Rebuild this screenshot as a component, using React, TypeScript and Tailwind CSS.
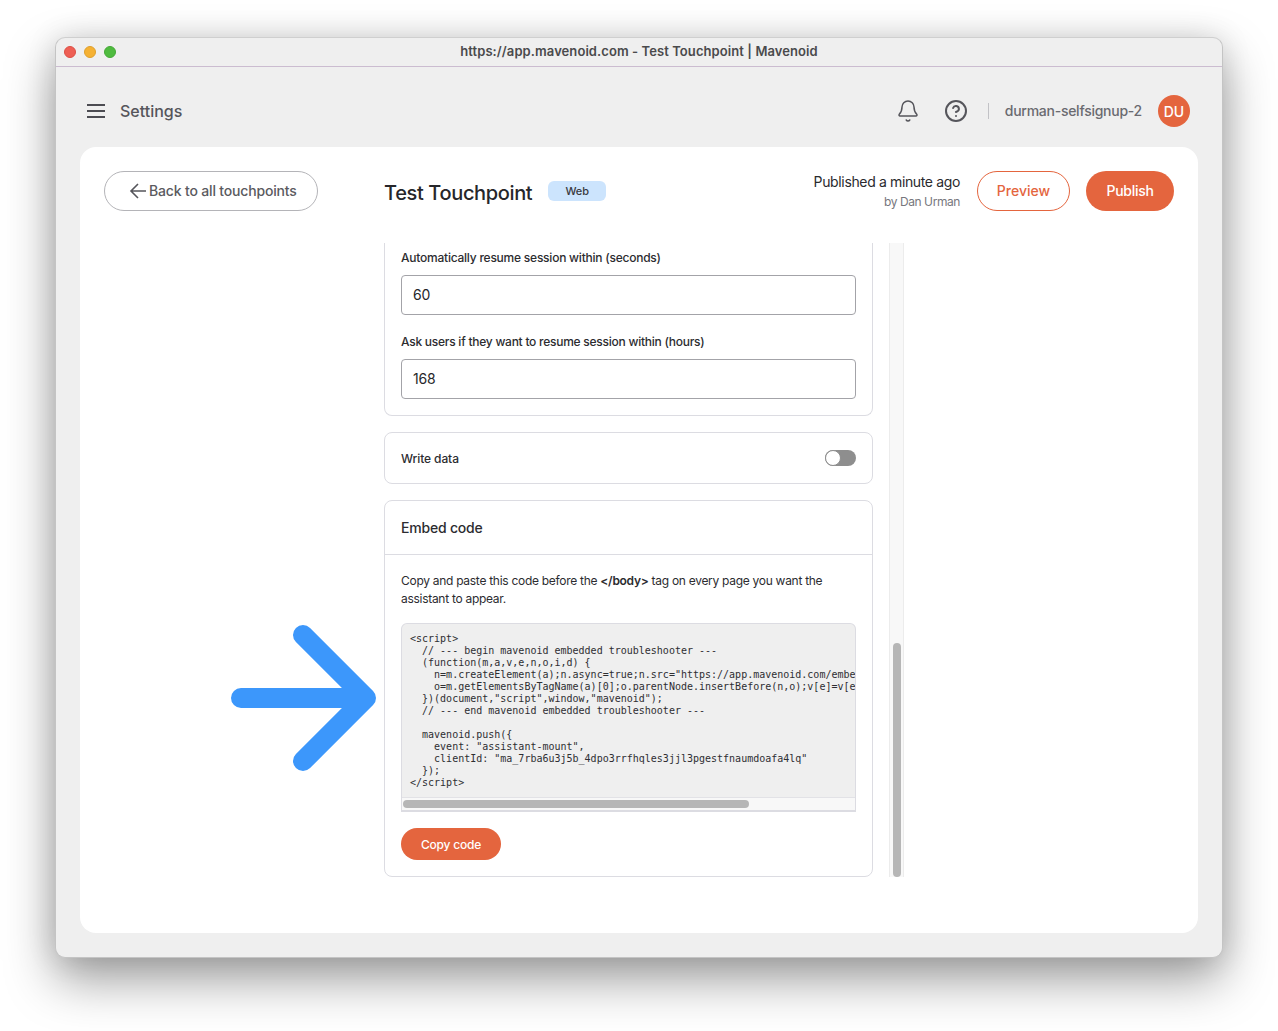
import { Bell, CircleHelp } from "lucide-react";

const codeLines = `<script>
  // --- begin mavenoid embedded troubleshooter ---
  (function(m,a,v,e,n,o,i,d) {
    n=m.createElement(a);n.async=true;n.src="https://app.mavenoid.com/embedded/embedded.js";
    o=m.getElementsByTagName(a)[0];o.parentNode.insertBefore(n,o);v[e]=v[e]||[];
  })(document,"script",window,"mavenoid");
  // --- end mavenoid embedded troubleshooter ---

  mavenoid.push({
    event: "assistant-mount",
    clientId: "ma_7rba6u3j5b_4dpo3rrfhqles3jjl3pgestfnaumdoafa4lq"
  });
</script>`;

function Field({ label, value, tracking }: { label: string; value: string; tracking: string }) {
  return (
    <div className="flex flex-col">
      <label className={`h-[18px] pt-px text-[12px] leading-[18px] font-medium text-[#2c2c30] ${tracking}`}>{label}</label>
      <div className="mt-[9px] h-10 rounded-[4px] border border-[#a3a3a8] px-[11px] pb-px flex items-center text-[14px] tracking-[-0.2px] text-[#26262a]">
        {value}
      </div>
    </div>
  );
}

function BigArrow() {
  return (
    <svg width="150" height="150" viewBox="0 0 150 150" className="absolute left-[173px] top-[584px]">
      <path d="M12 76 H137 M74 13 L137 76 L74 139" fill="none" stroke="#3c97fb" strokeWidth="20" strokeLinecap="round" strokeLinejoin="round" />
    </svg>
  );
}

export default function App() {
  return (
    <div className="w-[1278px] h-[1031px] bg-white pt-[38px] pl-[56px] overflow-hidden font-['Inter',sans-serif]">
      <div className="relative w-[1168px] h-[921px] rounded-[10px] bg-[#efefef] border border-[#c4c4c4] border-t-[#cfcfcf] shadow-[0_22px_50px_rgba(0,0,0,0.38),0_0_30px_rgba(0,0,0,0.12)] flex flex-col box-border -ml-px -mt-px">
        {/* title bar */}
        <div className="relative h-[29px] shrink-0 border-b border-[#cbbcd0] flex items-center justify-center">
          <div className="absolute left-[8px] top-[8px] flex gap-2">
            <span className="w-3 h-3 rounded-full bg-[#ee5f54] border border-[#dd4f45]" />
            <span className="w-3 h-3 rounded-full bg-[#f5b133] border border-[#dfa02c]" />
            <span className="w-3 h-3 rounded-full bg-[#4fbb3f] border border-[#45a937]" />
          </div>
          <span className="text-[13px] font-semibold tracking-[0.08px] text-[#4a4a4c] leading-none pb-px">
            https://app.mavenoid.com - Test Touchpoint | Mavenoid
          </span>
        </div>

        {/* app header */}
        <div className="h-[80px] shrink-0 pt-2 pl-[31px] pr-[32px] flex items-center text-[#55555b]">
          <svg width="18" height="14" viewBox="0 0 18 14" stroke="#4c4c52" strokeWidth="2">
            <path d="M0 1 H18 M0 7 H18 M0 13 H18" />
          </svg>
          <span className="ml-[15px] text-[16px] font-medium">Settings</span>
          <div className="ml-auto flex items-center">
            <Bell size={24} strokeWidth={1.5} />
            <CircleHelp size={24} strokeWidth={2} className="ml-6" />
            <div className="ml-5 w-px h-4 bg-[#c2c2c6]" />
            <span className="ml-4 pb-px text-[14px] font-medium tracking-[-0.26px] text-[#6a6a70]">durman-selfsignup-2</span>
            <span className="ml-4 w-8 h-8 rounded-full bg-[#e4653e] text-white text-[14px] font-medium flex items-center justify-center">DU</span>
          </div>
        </div>

        {/* main card */}
        <div className="mx-[24px] h-[786px] bg-white rounded-[16px] pt-6 px-6 flex flex-col">
          <div className="flex items-center h-10 shrink-0">
            <button className="w-[214px] h-10 pl-6 pb-px rounded-full border border-[#b4b4b8] flex items-center gap-[2px] text-[14px] font-medium tracking-[-0.17px] text-[#5a5a60]">
              <svg width="18" height="16" viewBox="0 0 18 16" fill="none" stroke="#55555b" strokeWidth="1.6">
                <path d="M17 8 H2 M9 1 L2 8 L9 15" />
              </svg>
              Back to all touchpoints
            </button>
            <h1 className="ml-[66px] pt-[3px] text-[20px] font-medium tracking-[-0.36px] text-[#26262a]">Test Touchpoint</h1>
            <span className="ml-[16px] w-[58px] h-5 rounded-[6px] bg-[#cce4fd] text-[11px] font-medium text-[#3a3a40] flex items-center justify-center">Web</span>
            <div className="ml-auto mr-[17px] text-right">
              <div className="text-[14px] leading-5 tracking-[-0.36px] text-[#2a2a2e] -mt-px">Published a minute ago</div>
              <div className="text-[12px] leading-4 mt-[2px] tracking-[-0.42px] text-[#77777d]">by Dan Urman</div>
            </div>
            <button className="w-[93px] h-10 pb-px rounded-full border border-[#e4653e] text-[14px] font-medium text-[#e4653e]">Preview</button>
            <button className="ml-4 w-[88px] h-10 pb-px rounded-full bg-[#e4653e] text-[14px] font-medium tracking-[-0.28px] text-white">Publish</button>
          </div>

          {/* scrolling column */}
          <div className="mt-8 ml-[280px] flex gap-4 h-[634px] items-stretch">
            <div className="w-[489px] flex flex-col gap-4">
              <div className="h-[173px] border border-t-0 border-[#dcdce2] rounded-b-[8px] px-4 pt-[5px] flex flex-col gap-[17px]">
                <Field label="Automatically resume session within (seconds)" value="60" tracking="tracking-[-0.23px]" />
                <Field label="Ask users if they want to resume session within (hours)" value="168" tracking="tracking-[-0.25px]" />
              </div>

              <div className="h-[52px] border border-[#dcdce2] rounded-[8px] pl-4 pr-4 flex items-center justify-between">
                <span className="pt-px text-[12px] font-medium tracking-[-0.1px] text-[#2c2c30]">Write data</span>
                <div className="relative w-[31px] h-[16px] rounded-full bg-[#8e8e8e]">
                  <div className="absolute left-0 top-0 w-[16px] h-[16px] rounded-full bg-white border border-[#8e8e8e]" />
                </div>
              </div>

              <div className="h-[377px] border border-[#dcdce2] rounded-[8px] flex flex-col">
                <div className="h-[54px] shrink-0 border-b border-[#dcdce2] px-4 flex items-center text-[14px] font-medium tracking-[-0.2px] text-[#2c2c30]">
                  Embed code
                </div>
                <div className="px-4 pt-4">
                  <p className="pt-px -mb-px text-[12px] leading-[18px] text-[#2c2c30] tracking-[-0.285px]">
                    Copy and paste this code before the <b className="font-semibold">&lt;/body&gt;</b> tag on every page you want the assistant to appear.
                  </p>
                  <div className="mt-4 h-[189px] rounded-t-[6px] border border-[#dcdce2] border-b-2 bg-[#efefef] flex flex-col overflow-hidden">
                    <pre className="h-[173px] shrink-0 overflow-hidden px-2 pt-[9px] font-['DejaVu_Sans_Mono',monospace] text-[10px] leading-[12px] text-[#2e2e32]">
                      {codeLines}
                    </pre>
                    <div className="flex-1 bg-[#f8f8f8] border-t border-[#e2e2e6] pl-[1px] pt-[2px]">
                      <div className="w-[346px] h-2 rounded-full bg-[#b6b6b6]" />
                    </div>
                  </div>
                  <button className="mt-4 w-[100px] h-8 pt-px rounded-full bg-[#e4653e] text-[12px] font-medium tracking-[-0.2px] text-white">Copy code</button>
                </div>
              </div>
            </div>

            {/* vertical scrollbar */}
            <div className="w-[15px] bg-[#f8f8f8] border-x border-[#ececec] flex flex-col justify-end pl-[3px] pr-[2px]">
              <div className="h-[234px] rounded-full bg-[#b6b6b6]" />
            </div>
          </div>
        </div>

        <BigArrow />
      </div>
    </div>
  );
}
